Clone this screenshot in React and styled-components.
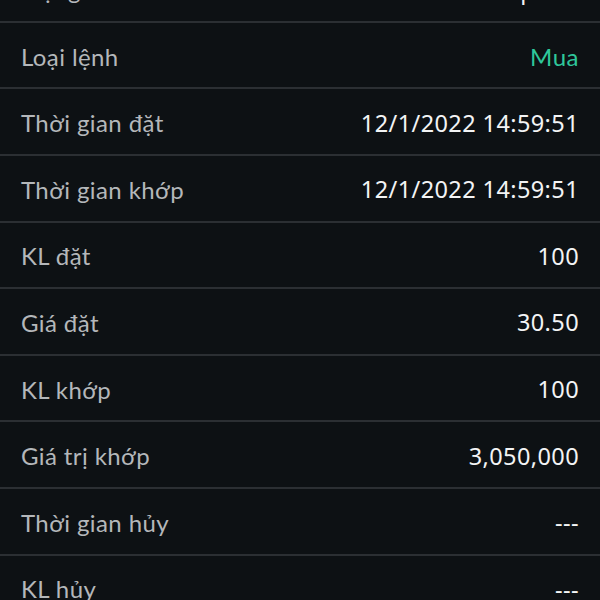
import React from "react";
import styled, { createGlobalStyle } from "styled-components";

const GlobalStyle = createGlobalStyle`
  html, body {
    margin: 0;
    padding: 0;
    background: #0d1114;
  }
`;

const Screen = styled.div`
  width: 600px;
  height: 600px;
  overflow: hidden;
  background: #0d1114;
`;

const List = styled.div`
  margin-top: -43.8px;
`;

const Row = styled.div`
  display: flex;
  align-items: center;
  justify-content: space-between;
  box-sizing: border-box;
  height: 66.6px;
  padding: 0 21px 0 21px;
  border-bottom: 2px solid #2b2f33;
`;

const Label = styled.span`
  font-family: Lato, "Noto Sans", sans-serif;
  font-size: 24px;
  letter-spacing: 0.4px;
  color: #b4b7ba;
  position: relative;
  top: 1px;
`;

const Value = styled.span`
  font-family: ${(p) => (p.$buy ? 'Lato, "Noto Sans", sans-serif' : '"Noto Sans", Lato, sans-serif')};
  font-size: ${(p) => (p.$buy ? "24px" : "23.5px")};
  letter-spacing: ${(p) => (p.$buy ? "0.5px" : "0.4px")};
  color: ${(p) => (p.$buy ? "#2fc79b" : "#f3f4f5")};
  position: relative;
  top: 1px;
`;

const rows = [
  { label: "Trạng thái", value: "Khớp hết" },
  { label: "Loại lệnh", value: "Mua", buy: true },
  { label: "Thời gian đặt", value: "12/1/2022 14:59:51" },
  { label: "Thời gian khớp", value: "12/1/2022 14:59:51" },
  { label: "KL đặt", value: "100" },
  { label: "Giá đặt", value: "30.50" },
  { label: "KL khớp", value: "100" },
  { label: "Giá trị khớp", value: "3,050,000" },
  { label: "Thời gian hủy", value: "---" },
  { label: "KL hủy", value: "---" },
];

export default function App() {
  return (
    <Screen>
      <GlobalStyle />
      <List>
        {rows.map((r) => (
          <Row key={r.label}>
            <Label>{r.label}</Label>
            <Value $buy={r.buy}>{r.value}</Value>
          </Row>
        ))}
      </List>
    </Screen>
  );
}
